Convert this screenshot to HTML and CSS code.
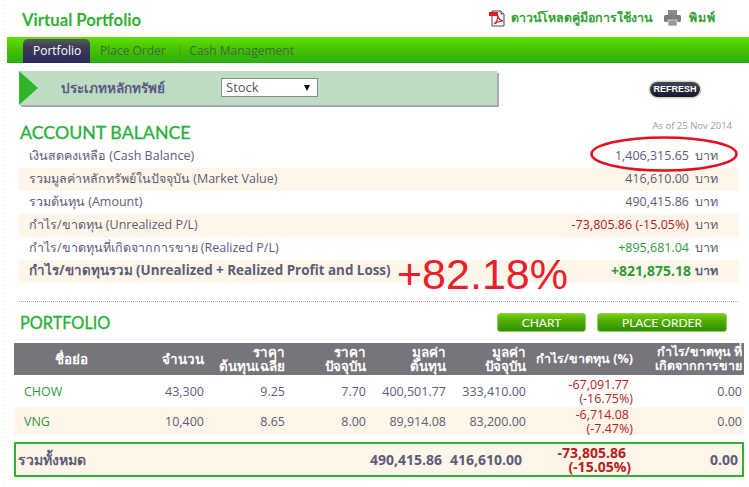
FILE: index.html
```html
<!DOCTYPE html>
<html lang="th">
<head>
<meta charset="utf-8">
<title>Virtual Portfolio</title>
<link rel="stylesheet" href="styles.css">
</head>
<body>
<div class="page">
  <header class="top">
    <h1 class="brand">Virtual Portfolio</h1>
    <div class="tools">
      <svg class="ico" width="17" height="17" viewBox="0 0 17 17"><path d="M3 1h9l3 3v12H3z" fill="#fff" stroke="#444" stroke-width="1"/><path d="M12 1v3h3" fill="#ddd" stroke="#444"/><rect x="0" y="2" width="9" height="4" fill="#d8201c"/><path d="M5 14c3-2 4-6 3.500-9 1 4 2.500 5.500 5.500 6-4 0-6 1-9 3z" fill="none" stroke="#d8201c" stroke-width="1.200"/></svg>
      <span class="tool-link">ดาวน์โหลดคู่มือการใช้งาน</span>
      <svg class="ico printer" width="17" height="16" viewBox="0 0 17 16"><rect x="4" y="0" width="9" height="5" fill="#8a8a8a"/><rect x="0" y="5" width="17" height="7" rx="1.500" fill="#7d7d7d"/><rect x="4" y="10" width="9" height="6" fill="#9a9a9a" stroke="#fff" stroke-width=".6"/></svg>
      <span class="tool-link print-link">พิมพ์</span>
    </div>
  </header>

  <nav class="nav">
    <a class="tab active">Portfolio</a>
    <a class="tab">Place Order</a>
    <span class="sep">|</span>
    <a class="tab">Cash Management</a>
  </nav>

  <section class="filter-row">
    <div class="filter">
      <span class="arrow"></span>
      <span class="filter-label">ประเภทหลักทรัพย์</span>
      <div class="select"><span>Stock</span><span class="caret"></span></div>
    </div>
    <button class="refresh">REFRESH</button>
  </section>

  <section class="balance">
    <div class="section-head">
      <h2 class="heading">ACCOUNT BALANCE</h2>
      <span class="asof">As of 25 Nov 2014</span>
    </div>
    <div class="b-row"><span>เงินสดคงเหลือ (Cash Balance)</span><span class="val">1,406,315.65</span><span class="unit">บาท</span></div>
    <div class="b-row alt"><span>รวมมูลค่าหลักทรัพย์ในปัจจุบัน (Market Value)</span><span class="val">416,610.00</span><span class="unit">บาท</span></div>
    <div class="b-row"><span>รวมต้นทุน (Amount)</span><span class="val">490,415.86</span><span class="unit">บาท</span></div>
    <div class="b-row alt"><span>กำไร/ขาดทุน (Unrealized P/L)</span><span class="val neg">-73,805.86 (-15.05%)</span><span class="unit">บาท</span></div>
    <div class="b-row"><span>กำไร/ขาดทุนที่เกิดจากการขาย (Realized P/L)</span><span class="val pos">+895,681.04</span><span class="unit">บาท</span></div>
    <div class="b-row alt strong"><span>กำไร/ขาดทุนรวม (Unrealized + Realized Profit and Loss)</span><span class="val pos">+821,875.18</span><span class="unit">บาท</span></div>
  </section>

  <section class="portfolio">
    <div class="section-head portfolio-head">
      <h2 class="heading small">PORTFOLIO</h2>
      <div class="actions">
        <button class="btn chart">CHART</button>
        <button class="btn order">PLACE ORDER</button>
      </div>
    </div>

    <div class="grid head">
      <span class="c-name">ชื่อย่อ</span>
      <span>จำนวน</span>
      <span>ราคา<br>ต้นทุนเฉลี่ย</span>
      <span>ราคา<br>ปัจจุบัน</span>
      <span>มูลค่า<br>ต้นทุน</span>
      <span>มูลค่า<br>ปัจจุบัน</span>
      <span class="h-narrow">กำไร/ขาดทุน (%)</span>
      <span class="h-narrow">กำไร/ขาดทุน ที่<br>เกิดจากการขาย</span>
    </div>
    <div class="grid row r1">
      <span class="sym">CHOW</span><span>43,300</span><span>9.25</span><span>7.70</span><span>400,501.77</span><span>333,410.00</span>
      <span class="neg pnl"><i>-67,091.77</i><br>(-16.75%)</span><span>0.00</span>
    </div>
    <div class="grid row r2 alt">
      <span class="sym">VNG</span><span>10,400</span><span>8.65</span><span>8.00</span><span>89,914.08</span><span>83,200.00</span>
      <span class="neg pnl"><i>-6,714.08</i><br>(-7.47%)</span><span>0.00</span>
    </div>
    <div class="grid total alt">
      <span class="t-name">รวมทั้งหมด</span><span></span><span></span><span></span><span>490,415.86</span><span>416,610.00</span>
      <span class="neg pnl"><i>-73,805.86</i><br>(-15.05%)</span><span>0.00</span>
    </div>
  </section>

  <svg class="circle" width="152" height="40" viewBox="0 0 152 40"><ellipse cx="76" cy="20" rx="72.500" ry="16.500" fill="none" stroke="#e01020" stroke-width="2.600"/></svg>
  <div class="big">+82.18%</div>
</div>
</body>
</html>
```

FILE: styles.css
```css
* { box-sizing: border-box; }
html, body { margin: 0; padding: 0; background: #fff; }
body { font-family: "Open Sans", "Noto Sans", "DejaVu Sans", sans-serif; color: #5d5d78; font-size: 12px; }
.page {
  position: relative;
  width: 749px;
  height: 487px;
  overflow: hidden;
  padding-left: 7px;
  background: repeating-linear-gradient(to bottom, #f6dcb8 0 1px, #fff 1px 4px) 4px 0 / 1px 100% no-repeat #fff;
}
.top { height: 37px; display: flex; justify-content: space-between; align-items: flex-start; }
.brand { margin: 10px 0 0 15px; font: 700 16.700px/20px Lato, sans-serif; color: #30b030; }
.tools { display: flex; align-items: center; margin: 9px 33px 0 0; height: 18px; }
.ico { display: block; flex: none; }
.tool-link { font: 700 12.400px/18px "DejaVu Sans", "Noto Sans", sans-serif; color: #35a035; margin-left: 5px; }
.printer { margin-left: 12px; }
.print-link { margin-left: 8px; letter-spacing: 1px; }
.nav {
  height: 26px;
  display: flex;
  align-items: flex-end;
  padding-left: 16px;
  background: linear-gradient(#5fe000 0, #49c400 45%, #2aae10 100%);
  font: 12px/24px Tahoma, "Open Sans", sans-serif;
  color: #3f6a3a;
}
.tab { height: 24px; padding: 0 10px; }
.tab.active {
  width: 67px;
  border-radius: 5px 5px 0 0;
  background: linear-gradient(#5a5a5a 0, #3b3b55 35%, #2a2a62 100%);
  color: #fff;
}
.sep { margin: 0 -4px 0 1px; opacity: .4; }
.filter-row { display: flex; align-items: flex-start; height: 60px; padding: 8px 0 0 12px; }
.filter {
  position: relative;
  width: 478px;
  height: 34px;
  display: flex;
  align-items: center;
  padding-left: 42px;
  background: repeating-conic-gradient(#c6d8bc 0 25%, #b6e0ca 0 50%) 0 0 / 2px 2px;
  box-shadow: 2px 2px 0 #a8a8b4;
}
.arrow {
  position: absolute; left: 0; top: 0; width: 0; height: 0;
  border-style: solid; border-width: 17px 0 17px 19px;
  border-color: transparent transparent transparent #2fb52a;
}
.filter-label { font: 700 13.500px/18px "DejaVu Sans", "Noto Sans", sans-serif; color: #5a5a85; width: 160px; }
.select {
  width: 97px; height: 19px; margin-top: -1px; background: #fff; border: 1px solid #8a8a8a;
  display: flex; justify-content: space-between; align-items: center;
  padding: 0 7px 0 4px; font: 13px/17px "Open Sans", sans-serif; color: #555;
}
.caret { width: 0; height: 0; border-style: solid; border-width: 6px 3.500px 0; border-color: #111 transparent transparent; }
.refresh {
  margin: 11px 0 0 153px; width: 50px; height: 15px; padding: 0; border: 0;
  border-radius: 8px; background: linear-gradient(#45455a, #14142a); color: #fff;
  font: 700 9px/15px "Liberation Sans", sans-serif;
  box-shadow: 0 0 0 1.500px #c6dcb8;
}
.balance { padding-left: 12px; width: 732px; margin-top: -3px; }
.section-head { display: flex; justify-content: space-between; }
.balance .section-head { height: 25px; padding-top: 2px; align-items: flex-start; }
.heading { margin: 0 0 0 1px; font: 400 17.800px/20px Lato, sans-serif; color: #27b038; -webkit-text-stroke: .3px #27b038; }
.heading.small { font-size: 16.300px; }
.asof { font-size: 9.500px; line-height: 12px; color: #9a9aa8; margin: -2px 7px 0 0; }
.b-row { height: 23px; display: flex; align-items: center; padding: 0 21px 2px 10px; font: 12.500px/21px Tahoma, "Open Sans", "Noto Sans", sans-serif; color: #5d5d78; }
.b-row > span:first-child { flex: 1; }
.unit { width: 23px; margin-left: 6px; text-align: right; }
.strong { font-weight: 700; font-size: 13.400px; }
.strong .val { font-size: 14px; margin-right: -2px; }
.strong .unit { font-size: 12.500px; }
.alt { background: repeating-conic-gradient(#ffeee2 0 25%, #fffdf2 0 50%) 0 0 / 2px 2px; }
.neg { color: #b82020; }
.pos { color: #2d9a3a; }
.portfolio { padding-left: 7px; width: 737px; margin-top: 28px; position: relative; }
.portfolio::before {
  content: ""; position: absolute; left: 12px; top: -10px; width: 719px;
  border-top: 1px dotted #a8a8a8;
}
.portfolio-head { height: 32px; padding-top: 2px; padding-left: 5px; padding-right: 17px; }
.actions { display: flex; gap: 11px; }
.btn {
  height: 19px; padding: 0; border: 1px solid #8fd060; border-radius: 3px;
  background: linear-gradient(#74d400 0, #55b000 35%, #2f8f00 100%);
  color: #fff; font: 12px/17px Lato, sans-serif;
}
.chart { width: 89px; }
.order { width: 130px; }
.grid {
  display: grid;
  grid-template-columns: 116px 76px 81px 81px 80px 80px 107px 109px;
  text-align: right;
  font: 12.500px/14px Tahoma, "Open Sans", "Noto Sans", sans-serif;
  align-items: center;
}
.grid > span { padding-right: 2px; }
.head {
  height: 32px;
  background: #77757c;
  color: #fff;
  font-weight: 700;
  font-size: 13.400px;
  line-height: 14px;
}
.head .h-narrow { font-size: 12.500px; }
.c-name { text-align: center; }
.row { height: 32px; padding-top: 1px; }
.r2 { height: 28px; }
.sym { text-align: left; padding-left: 10px; color: #2d9a3a; }
.pnl i { font-style: normal; padding-right: 4px; }
.total {
  margin-top: 7px;
  height: 35px;
  border: 2px solid #2db52d;
  font-weight: 700;
  font-size: 14px;
  grid-template-columns: 114px 76px 81px 81px 76px 80px 109px 107px;
}
.total .pnl i { padding-right: 5px; }
.t-name { text-align: left; padding-left: 2px; }
.circle { position: absolute; left: 588px; top: 134px; }
.big { position: absolute; left: 397px; top: 249px; font: 43px/50px "Liberation Sans", sans-serif; color: #e8202c; }
```
